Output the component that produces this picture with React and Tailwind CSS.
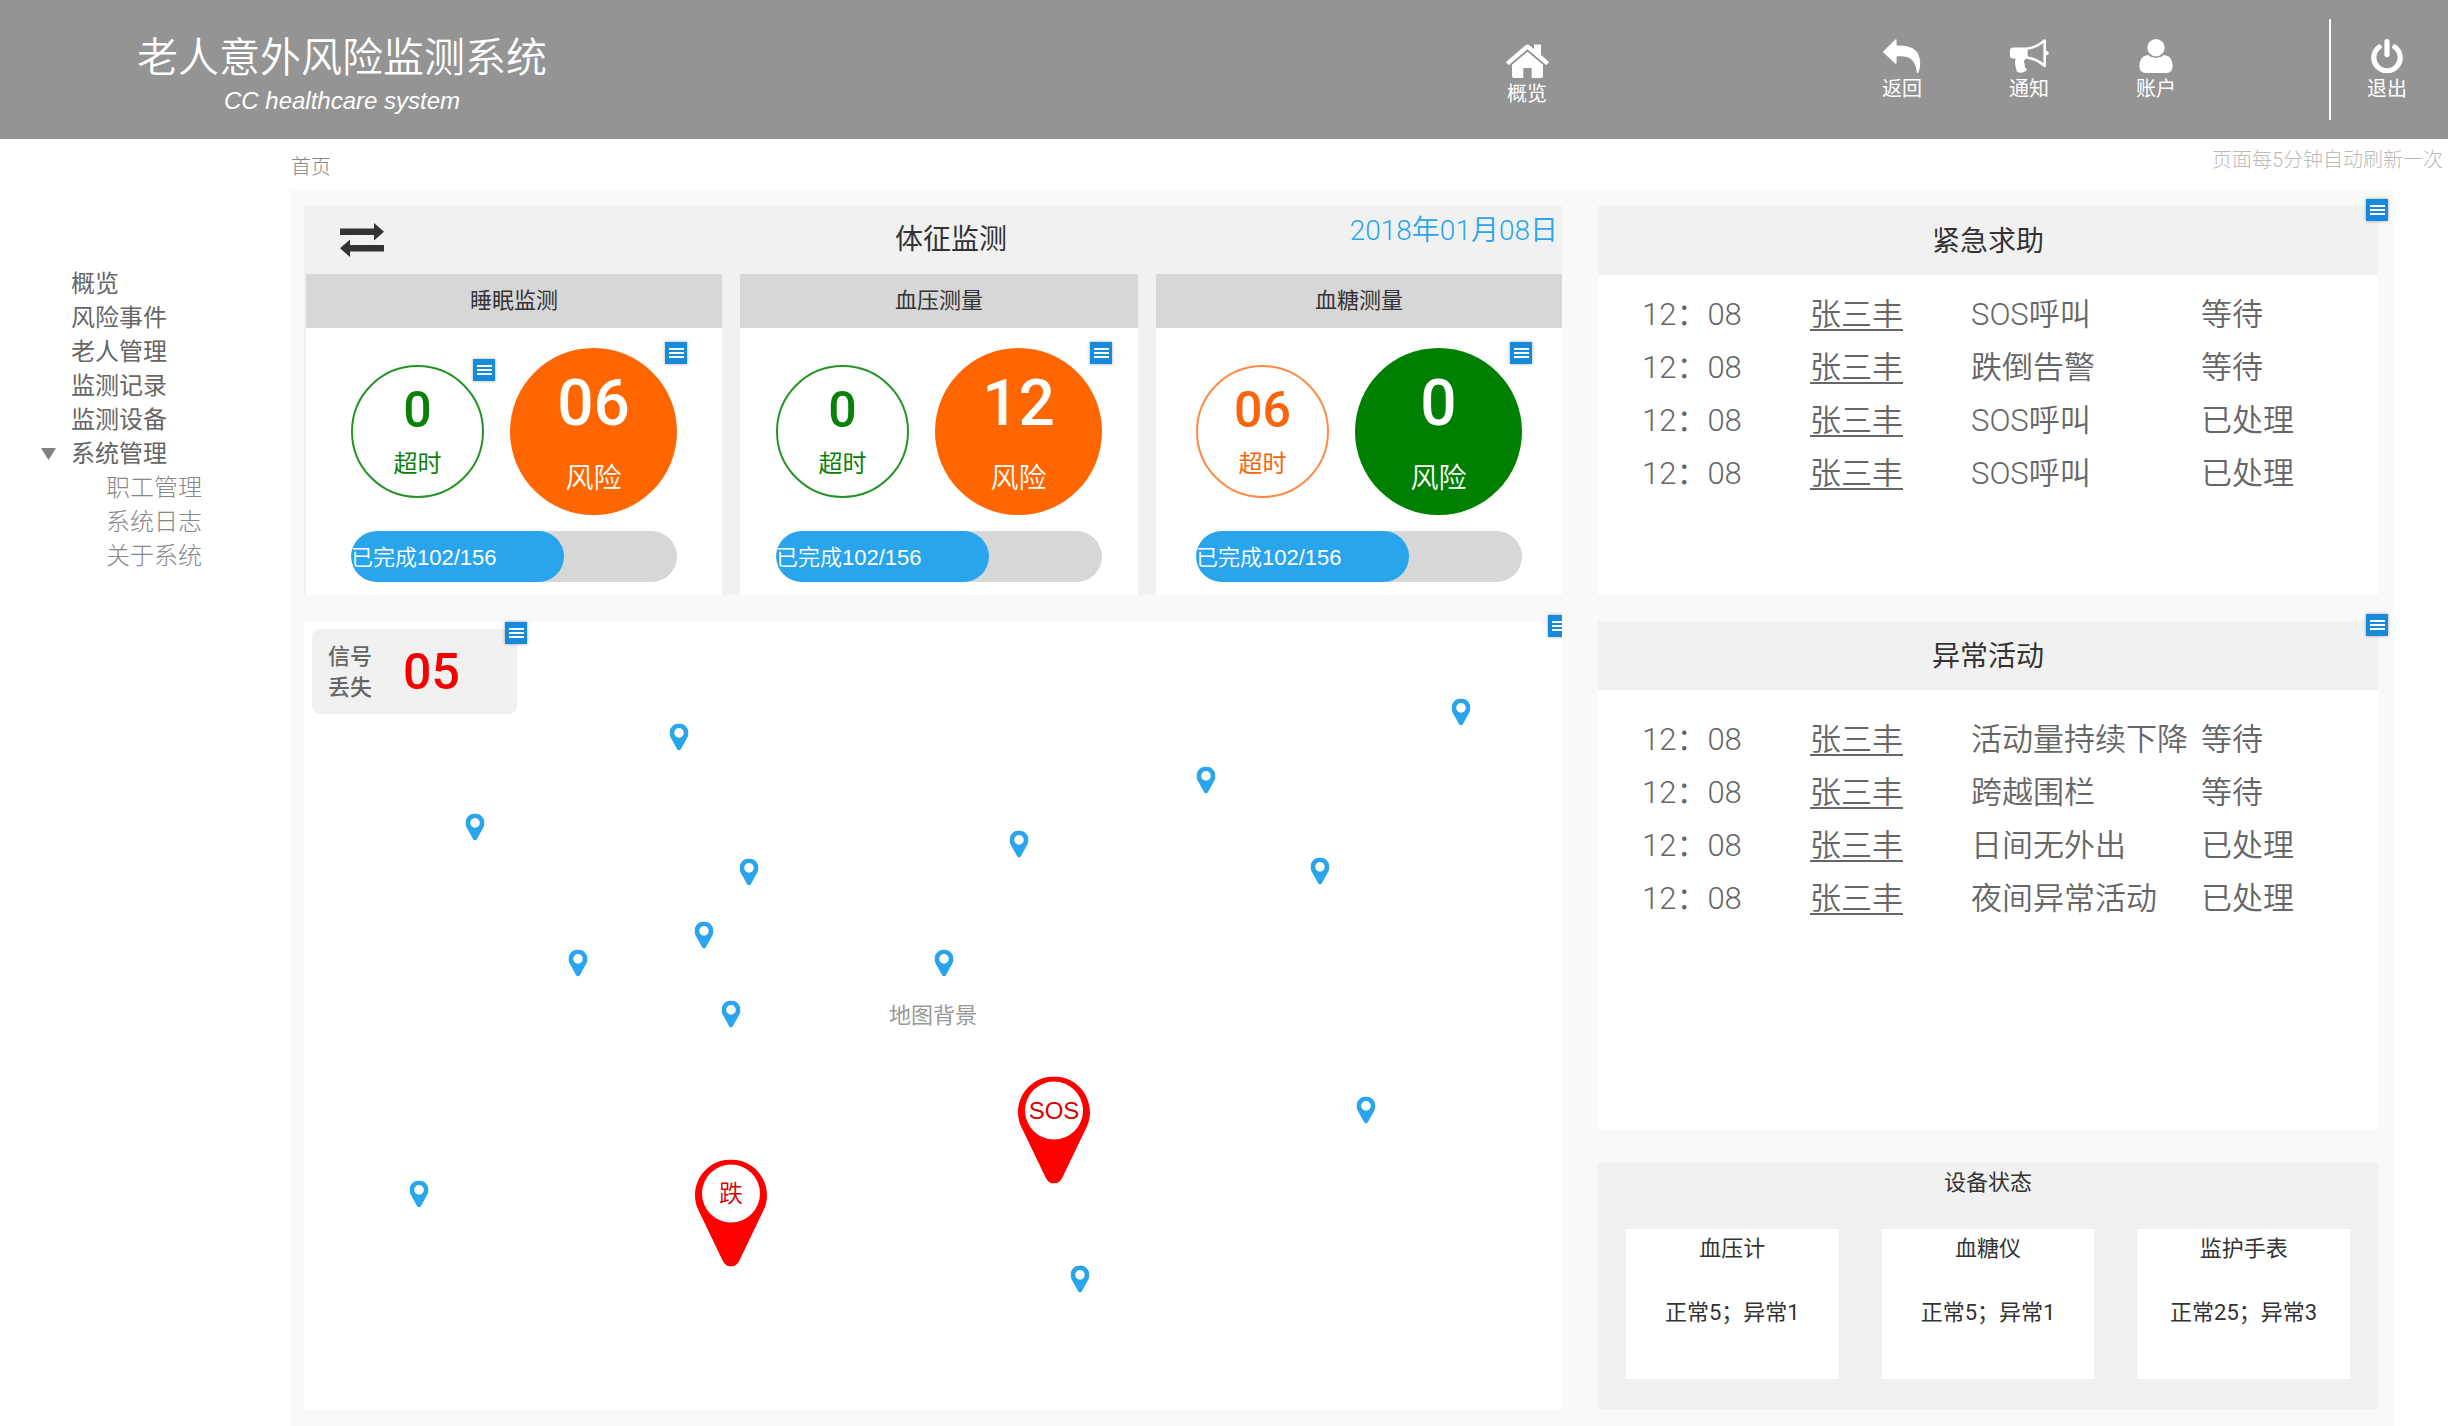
const FONT = "font-['Roboto','Noto_Sans_CJK_SC',sans-serif]";

function MenuBadge({ label, className }) {
  return (
    <button
      type="button"
      aria-label={label}
      className={`absolute flex h-[22px] w-[22px] flex-col items-center justify-center gap-[2px] bg-[#168adb] shadow-[0_0_3px_rgba(0,0,0,0.35)] ${className}`}
    >
      <span className="h-[2px] w-[15px] bg-white" />
      <span className="h-[2px] w-[15px] bg-white" />
      <span className="h-[2px] w-[15px] bg-white" />
    </button>
  );
}

function HomeIcon() {
  return (
    <svg viewBox="0 0 43 34" className="h-[34px] w-[43px]" fill="currentColor" aria-hidden="true">
      <path d="M0.5 17.5 L19.5 1.2 Q21.5 -0.4 23.5 1.2 L28 5 V0.5 H35 V11 L42.5 17.5 Q43 18.3 42.2 19.2 L41 20.5 Q40.3 21 39.5 20.4 L21.5 5.2 L3.5 20.4 Q2.7 21 2 20.5 L0.8 19.2 Q0 18.3 0.5 17.5 Z" />
      <path d="M21.5 7.8 L37 20.8 V32 Q37 34 35 34 H25.7 V24 H17.3 V34 H8 Q6 34 6 32 V20.8 Z" />
    </svg>
  );
}

function BackIcon() {
  return (
    <svg viewBox="0 0 38 34" className="h-[34px] w-[38px]" fill="currentColor" aria-hidden="true">
      <path d="M0.4 12.2 L12.3 0.6 Q13.6 -0.2 13.6 1.2 V6.6 C24 6.4 32 8.4 35.4 15.5 C38 21.5 37.6 28.5 35.4 33.6 Q34.4 34.4 33.8 33.4 C33 24 29 18.6 21 17.6 C18.5 17.3 16 17.3 13.6 17.4 V23.4 Q13.6 25.4 12.2 24.6 L0.4 13.6 Q-0.2 12.9 0.4 12.2 Z" />
    </svg>
  );
}

function NoticeIcon() {
  return (
    <svg viewBox="0 0 39 34" className="h-[34px] w-[39px]" aria-hidden="true">
      <path
        fill="currentColor"
        d="M2.5 8.6 H15 C22 8.6 29 4.6 33.6 0.5 Q36 -0.6 36 1.8 V11.4 Q38.8 12 38.8 14 Q38.8 16 36 16.6 V26.6 Q36 29 33.6 27.8 C28.5 23.4 22.4 20.4 16.4 19.8 C13.6 20.8 13.4 23.6 15 25.2 C13.8 27.2 15 28.8 17 30.4 C15.8 33.2 10.4 34.8 7 32.8 C5.8 28.4 4.2 24.4 5.6 19.6 H2.5 Q0 19.4 0 17 V11.2 Q0 8.8 2.5 8.6 Z"
      />
      <path fill="#949494" d="M17.6 10.8 C23.4 10.2 28.8 7.4 33.4 4 V24.2 C28.8 20.8 23.4 18 17.6 17.4 Z" />
    </svg>
  );
}

function UserIcon() {
  return (
    <svg viewBox="0 0 34 34" className="h-[34px] w-[34px]" fill="currentColor" aria-hidden="true">
      <ellipse cx="17" cy="8.7" rx="8.7" ry="8.7" />
      <path d="M9 16 Q17 22.2 25 16 C31.5 16.4 33.6 22 33.6 27.6 Q33.6 34 27.4 34 H6.6 Q0.4 34 0.4 27.6 C0.4 22 2.5 16.4 9 16 Z" />
    </svg>
  );
}

function PowerIcon() {
  return (
    <svg viewBox="0 0 34 34" className="h-[34px] w-[34px]" fill="none" stroke="currentColor" strokeWidth="5.2" strokeLinecap="round" aria-hidden="true">
      <path d="M9.2 8 A13.2 13.2 0 1 0 24.8 8" />
      <path d="M17 2.6 V15.6" />
    </svg>
  );
}

function NavButton({ icon, label, className = "" }) {
  return (
    <button type="button" className={`flex w-12 flex-col items-center gap-[2px] text-[20px] leading-[28px] text-white ${className}`}>
      {icon}
      {label}
    </button>
  );
}

function Header() {
  return (
    <header className="flex h-[139px] items-start bg-[#949494] pr-[37px] text-white">
      <div className="ml-[137px] flex flex-col items-center pt-[33px]">
        <h1 className="text-[41px] leading-[50px] font-[350]">老人意外风险监测系统</h1>
        <p className="pt-[3px] font-['Liberation_Sans',sans-serif] text-[24px] leading-[30px] italic">CC healthcare system</p>
      </div>
      <nav aria-label="主导航" className="ml-auto flex items-start pt-[39px]">
        <NavButton icon={<HomeIcon />} label="概览" className="mr-[327px] mt-[5px]" />
        <div className="flex gap-[79px]">
          <NavButton icon={<BackIcon />} label="返回" />
          <NavButton icon={<NoticeIcon />} label="通知" />
          <NavButton icon={<UserIcon />} label="账户" />
        </div>
      </nav>
      <div className="mt-[19px] mr-8 ml-[149px] h-[101px] w-[2px] bg-white" />
      <NavButton icon={<PowerIcon />} label="退出" className="mt-[39px]" />
    </header>
  );
}

function Sidebar() {
  const items = ["概览", "风险事件", "老人管理", "监测记录", "监测设备"];
  const subItems = ["职工管理", "系统日志", "关于系统"];
  return (
    <nav aria-label="侧边栏" className="w-[291px] shrink-0 pt-32 text-[24px] leading-[34px] text-[#666]">
      <ul>
        {items.map((item) => (
          <li key={item} className="pl-[71px]">
            <a href="#">{item}</a>
          </li>
        ))}
        <li>
          <button type="button" aria-expanded="true" className="flex items-center pl-[41px]">
            <svg viewBox="0 0 15 12" className="mr-[15px] h-3 w-[15px]" fill="#808080" aria-hidden="true">
              <path d="M0 0 H15 L7.5 12 Z" />
            </svg>
            系统管理
          </button>
          <ul className="pl-[106px] font-light text-[#888]">
            {subItems.map((item) => (
              <li key={item}>
                <a href="#">{item}</a>
              </li>
            ))}
          </ul>
        </li>
      </ul>
    </nav>
  );
}

const vitals = [
  { title: "睡眠监测", width: "grow-[416]", late: "0", lateTone: "border-[#259425] text-[#0a800a]", lateMenu: true, risk: "06", riskTone: "bg-[#ff6600]" },
  { title: "血压测量", width: "grow-[398]", late: "0", lateTone: "border-[#259425] text-[#0a800a]", risk: "12", riskTone: "bg-[#ff6600]" },
  { title: "血糖测量", width: "grow-[406]", late: "06", lateTone: "border-[#ff8a45] text-[#fa640a]", risk: "0", riskTone: "bg-[#008000]" },
];

function VitalCard({ title, width, late, lateTone, lateMenu, risk, riskTone }) {
  const done = 102;
  const total = 156;
  return (
    <article className={`basis-0 bg-white ${width}`}>
      <h3 className="bg-[#d7d7d7] text-center text-[22px] leading-[54px] text-[#333]">{title}</h3>
      <div className="mx-auto w-[326px] pt-5 pb-[13px]">
        <div className="flex items-center justify-between">
          <div className={`relative flex h-[133px] w-[133px] flex-col items-center rounded-full border-2 pt-[18px] ${lateTone}`}>
            <span className="text-[50px] leading-[50px] font-medium">{late}</span>
            <span className="pt-[15px] text-[24px] leading-[28px]">超时</span>
            {lateMenu && <MenuBadge label="超时菜单" className="-top-2 -right-[13px]" />}
          </div>
          <div className={`relative flex h-[167px] w-[167px] flex-col items-center rounded-full pt-6 text-white ${riskTone}`}>
            <span className="text-[64px] leading-[64px] font-medium">{risk}</span>
            <span className="pt-[27px] text-[28px] leading-[32px] font-[350]">风险</span>
            <MenuBadge label="风险菜单" className="-top-[6px] -right-[10px]" />
          </div>
        </div>
        <div
          role="progressbar"
          aria-label={title}
          aria-valuenow={done}
          aria-valuemin={0}
          aria-valuemax={total}
          className="mt-4 h-[51px] overflow-hidden rounded-full bg-[#d7d7d7]"
        >
          <div
            className="h-full rounded-full bg-[#29a5ed] pt-px font-['Liberation_Sans','Noto_Sans_CJK_SC',sans-serif] text-[22px] leading-[51px] font-[350] whitespace-nowrap text-white"
            style={{ width: `${(done / total) * 100}%` }}
          >
            已完成{done}/{total}
          </div>
        </div>
      </div>
    </article>
  );
}

function VitalsPanel() {
  return (
    <section className="bg-[#f1f1f1]">
      <div className="grid h-[68px] grid-cols-[1fr_auto_1fr] items-center pl-9">
        <button type="button" aria-label="切换" className="justify-self-start">
          <svg viewBox="0 0 44 34" className="h-[34px] w-[44px]" fill="#333" aria-hidden="true">
            <path d="M0 5.5 H34 V0 L44 8.8 L34 17.4 V12 H0 Z" />
            <path d="M44 22 H10 V16.6 L0 25.3 L10 34 V28.5 H44 Z" />
          </svg>
        </button>
        <h2 className="text-[28px] leading-[36px] text-[#333]">体征监测</h2>
        <time dateTime="2018-01-08" className="self-start justify-self-end pt-[7px] pr-1 text-[28px] leading-[36px] font-[350] text-[#29a5ed]">
          2018年01月08日
        </time>
      </div>
      <div className="flex gap-[18px] pl-[2px]">
        {vitals.map((vital) => (
          <VitalCard key={vital.title} {...vital} />
        ))}
      </div>
    </section>
  );
}

const MAP_WIDTH = 1258;
const MAP_HEIGHT = 786;

const pins = [
  [375, 115], [171, 205], [445, 250], [400, 313], [274, 341], [427, 392], [115, 571],
  [640, 341], [715, 222], [902, 158], [1016, 249], [1157, 90], [1062, 487], [776, 656],
];

const alarms = [
  { text: "跌", x: 427, y: 590 },
  { text: "SOS", x: 750, y: 507 },
];

const place = (x, y) => ({ left: `${(x / MAP_WIDTH) * 100}%`, top: `${(y / MAP_HEIGHT) * 100}%` });

function MapPanel() {
  return (
    <section aria-label="地图" className="relative min-h-[786px] grow overflow-x-clip bg-white">
      <div className="relative mt-[7px] ml-2 flex h-[85px] w-[205px] items-center rounded-lg bg-[#f1f1f1] pl-4">
        <span className="w-11 text-[22px] leading-[31px] font-medium text-[#666]">信号丢失</span>
        <span className="pl-[31px] text-[50px] leading-[50px] font-medium text-[#f40000]">05</span>
        <MenuBadge label="信号菜单" className="-top-[7px] -right-[10px]" />
      </div>
      <MenuBadge label="地图菜单" className="-top-[7px] -right-2" />
      <p className="absolute top-1/2 left-1/2 -translate-x-1/2 -translate-y-1/2 text-[22px] leading-[30px] text-[#999]">地图背景</p>
      {pins.map(([x, y]) => (
        <svg
          key={`${x}-${y}`}
          viewBox="0 0 19 27"
          className="absolute h-[27px] w-[19px] -translate-x-1/2 -translate-y-1/2"
          style={place(x, y)}
          fill="#29a5ed"
          fillRule="evenodd"
          aria-hidden="true"
        >
          <path d="M9.5 0 C14.8 0 19 4.2 19 9.4 C19 11.4 18.4 12.8 17.6 14.4 L11.2 26 Q9.5 28 7.8 26 L1.4 14.4 C0.6 12.8 0 11.4 0 9.4 C0 4.2 4.2 0 9.5 0 Z M9.5 4.6 A4.8 4.8 0 1 0 9.5 14.2 A4.8 4.8 0 1 0 9.5 4.6 Z" />
        </svg>
      ))}
      {alarms.map(({ text, x, y }) => (
        <div key={text} className="absolute h-[107px] w-[72px] -translate-x-1/2 -translate-y-1/2" style={place(x, y)}>
          <svg viewBox="0 0 72 107" className="absolute inset-0 h-full w-full" aria-hidden="true">
            <path fill="#f00" d="M36 0 C56 0 72 16 72 36 C72 42 70.6 46.6 68.4 51 L44.4 101 Q41.6 107 36 107 Q30.4 107 27.6 101 L3.6 51 C1.4 46.6 0 42 0 36 C0 16 16 0 36 0 Z" />
            <circle cx="36" cy="34" r="29" fill="#fff" />
          </svg>
          <span className="relative block text-center font-['Liberation_Sans','Noto_Sans_CJK_SC',sans-serif] text-[24px] leading-[68px] font-[350] text-[#d90000]">
            {text}
          </span>
        </div>
      ))}
    </section>
  );
}

const helpRows = [
  ["12：08", "张三丰", "SOS呼叫", "等待"],
  ["12：08", "张三丰", "跌倒告警", "等待"],
  ["12：08", "张三丰", "SOS呼叫", "已处理"],
  ["12：08", "张三丰", "SOS呼叫", "已处理"],
];

const activityRows = [
  ["12：08", "张三丰", "活动量持续下降", "等待"],
  ["12：08", "张三丰", "跨越围栏", "等待"],
  ["12：08", "张三丰", "日间无外出", "已处理"],
  ["12：08", "张三丰", "夜间异常活动", "已处理"],
];

function EventPanel({ title, rows, className, tableClass }) {
  return (
    <section className={`relative bg-white ${className}`}>
      <h2 className="bg-[#f1f1f1] pt-[2px] text-center text-[28px] leading-[67px] text-[#333]">{title}</h2>
      <MenuBadge label={`${title}菜单`} className="-top-[7px] -right-[10px]" />
      <div className={tableClass}>
        <table aria-label={title} className="w-full table-fixed text-left text-[31px] leading-[53px] font-[350] text-[#666]">
          <colgroup>
            <col className="w-[212px]" />
            <col className="w-[161px]" />
            <col className="w-[230px]" />
            <col />
          </colgroup>
          <tbody>
            {rows.map(([time, name, event, status], i) => (
              <tr key={i}>
                <td className="p-0 pl-11">{time}</td>
                <td className="p-0">
                  <a href="#" className="underline decoration-2 underline-offset-4">{name}</a>
                </td>
                <td className="p-0 whitespace-nowrap">{event}</td>
                <td className="p-0">{status}</td>
              </tr>
            ))}
          </tbody>
        </table>
      </div>
    </section>
  );
}

const devices = [
  ["血压计", "正常5；异常1"],
  ["血糖仪", "正常5；异常1"],
  ["监护手表", "正常25；异常3"],
];

function DevicePanel() {
  return (
    <section className="rounded bg-[#f1f1f1] px-7 pt-[5px] pb-[30px] text-center text-[22px] leading-8 text-[#333]">
      <h2>设备状态</h2>
      <div className="mt-[30px] grid grid-cols-3 gap-[43px]">
        {devices.map(([name, status]) => (
          <article key={name} className="min-h-[150px] bg-white pt-1">
            <h3>{name}</h3>
            <p className="pt-8">{status}</p>
          </article>
        ))}
      </div>
    </section>
  );
}

export default function App() {
  return (
    <div className={`flex min-h-screen flex-col bg-white pr-1 ${FONT}`} lang="zh-CN">
      <Header />
      <div className="flex grow">
        <Sidebar />
        <main className="flex min-w-0 grow flex-col">
          <div className="flex h-[51px] items-start justify-between pr-[5px] text-[20px] leading-[28px] font-light">
            <a href="#" className="pt-[14px] text-[#888]">首页</a>
            <p className="pt-[7px] text-[#bbb]">页面每5分钟自动刷新一次</p>
          </div>
          <div className="mr-[54px] grid grow grid-cols-[1258fr_780fr] gap-9 bg-[#f9f9f9] pt-4 pr-4 pb-[18px] pl-[13px]">
            <div className="flex flex-col gap-[27px]">
              <VitalsPanel />
              <MapPanel />
            </div>
            <div className="flex flex-col">
              <EventPanel title="紧急求助" rows={helpRows} className="mb-[26px] min-h-[389px]" tableClass="pt-[13px]" />
              <EventPanel title="异常活动" rows={activityRows} className="mb-[33px] min-h-[508px]" tableClass="pt-[23px]" />
              <DevicePanel />
            </div>
          </div>
        </main>
      </div>
    </div>
  );
}
